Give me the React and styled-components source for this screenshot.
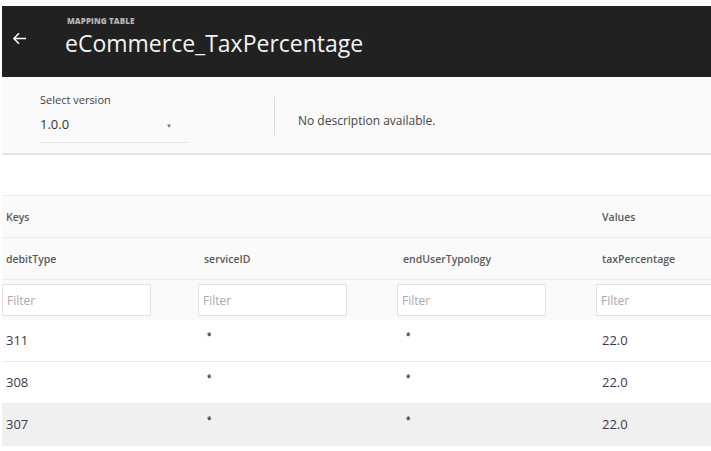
import styled, { createGlobalStyle } from "styled-components";

const GlobalStyle = createGlobalStyle`
  body {
    margin: 0;
    background: #ffffff;
    font-family: "Open Sans", "Noto Sans", sans-serif;
  }
`;

const Page = styled.div`
  padding: 6px 0 0 2px;
  width: 709px;
  overflow: hidden;
`;

const Header = styled.header`
  background-color: #212121;
  height: 71px;
  display: flex;
  align-items: center;
  padding-left: 10px;
`;

const BackArrow = styled.svg`
  width: 15px;
  height: 15px;
  margin: -6px 38px 0 0;
  flex-shrink: 0;
`;

const TitleBox = styled.div`
  display: flex;
  flex-direction: column;
  margin-top: -8px;
`;

const Kicker = styled.span`
  color: #b5b5b5;
  font-size: 8px;
  font-weight: 800;
  letter-spacing: 0.1px;
  line-height: 10px;
  margin-left: 2px;
`;

const Title = styled.h1`
  color: #f2f2f2;
  font-size: 23px;
  font-weight: 400;
  margin: 0;
  line-height: 34px;
`;

const SubBar = styled.section`
  background-color: #fafafa;
  height: 76px;
  border-bottom: 2px solid #e2e2e2;
  display: flex;
  align-items: center;
  padding-left: 38px;
`;

const VersionBox = styled.div`
  width: 148px;
  display: flex;
  flex-direction: column;
  border-bottom: 1px solid #e4e4e4;
  padding-bottom: 2px;
  margin-top: 4px;
`;

const Label = styled.span`
  font-size: 11px;
  color: #444;
  line-height: 16px;
`;

const Select = styled.div`
  display: flex;
  justify-content: space-between;
  align-items: center;
  font-size: 13px;
  color: #333;
  line-height: 28px;
  padding-right: 16px;
  span:last-child {
    font-size: 6px;
    color: #777;
    margin-top: 4px;
  }
`;

const Divider = styled.div`
  width: 1px;
  height: 38px;
  background: #dcdcdc;
  margin: 2px 23px 0 86px;
`;

const Description = styled.p`
  font-size: 12px;
  color: #444;
  margin: 10px 0 0;
`;

const Table = styled.div`
  margin-top: 40px;
  display: grid;
  grid-template-columns: 196px 199px 199px 1fr;
  border-top: 1px solid #ececec;
`;

const HeadCell = styled.div`
  box-sizing: border-box;
  background-color: #fafafa;
  height: 42px;
  border-bottom: 1px solid #ececec;
  display: flex;
  align-items: center;
  padding-left: ${(p) => (p.$first ? "4px" : "6px")};
  font-size: 10.5px;
  font-weight: 600;
  color: #5a5a5a;
  grid-column: ${(p) => p.$span || "auto"};
`;

const FilterCell = styled.div`
  background-color: #fafafa;
  height: 40px;
  display: flex;
  align-items: center;
`;

const FilterInput = styled.input`
  width: 149px;
  height: 32px;
  box-sizing: border-box;
  border: 1px solid #e2e2e2;
  background: #fff;
  font-family: inherit;
  font-size: 12px;
  padding: 0 4px;
  color: #333;
  outline: none;
  &::placeholder {
    color: #aaa;
  }
`;

const DataCell = styled.div`
  box-sizing: border-box;
  background-color: ${(p) => (p.$shade ? "#f0f0f0" : "#ffffff")};
  height: 42px;
  border-bottom: 1px solid #ececec;
  display: flex;
  align-items: center;
  padding-left: ${(p) => (p.$first ? "4px" : "6px")};
  padding-bottom: 2px;
  font-size: 13px;
  color: #3a3a4a;
`;

const Star = styled.span`
  font-size: 8px;
  font-weight: 700;
  margin-left: 3px;
  margin-top: -8px;
`;

const columns = ["debitType", "serviceID", "endUserTypology", "taxPercentage"];
const rows = [
  { debitType: "311", serviceID: "*", endUserTypology: "*", taxPercentage: "22.0" },
  { debitType: "308", serviceID: "*", endUserTypology: "*", taxPercentage: "22.0" },
  { debitType: "307", serviceID: "*", endUserTypology: "*", taxPercentage: "22.0" },
];

const App = () => {
  return (
    <Page>
      <GlobalStyle />
      <Header>
        <BackArrow viewBox="0 0 16 16" fill="none" stroke="#ffffff" strokeWidth="1.6">
          <path d="M15 8H2M7.5 2.5L2 8l5.5 5.5" />
        </BackArrow>
        <TitleBox>
          <Kicker>MAPPING TABLE</Kicker>
          <Title>eCommerce_TaxPercentage</Title>
        </TitleBox>
      </Header>
      <SubBar>
        <VersionBox>
          <Label>Select version</Label>
          <Select>
            <span>1.0.0</span>
            <span>▼</span>
          </Select>
        </VersionBox>
        <Divider />
        <Description>No description available.</Description>
      </SubBar>
      <Table>
        <HeadCell $first $span="span 3">Keys</HeadCell>
        <HeadCell>Values</HeadCell>
        {columns.map((c, i) => (
          <HeadCell key={c} $first={i === 0}>{c}</HeadCell>
        ))}
        {columns.map((c) => (
          <FilterCell key={c}>
            <FilterInput placeholder="Filter" />
          </FilterCell>
        ))}
        {rows.map((r, ri) =>
          columns.map((c, i) => (
            <DataCell key={ri + c} $first={i === 0} $shade={ri === 2}>
              {r[c] === "*" ? <Star>*</Star> : r[c]}
            </DataCell>
          ))
        )}
      </Table>
    </Page>
  );
};

export default App;
